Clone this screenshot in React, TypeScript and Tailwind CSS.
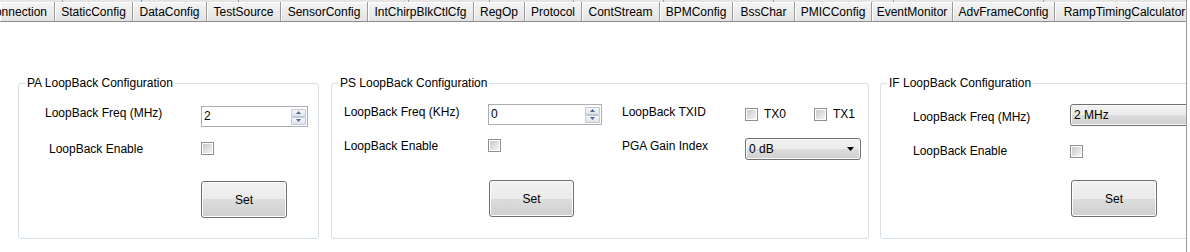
import React from "react";

const tabs = [
  { label: "Connection", w: "w-[54px]", first: true },
  { label: "StaticConfig", w: "w-[78px]" },
  { label: "DataConfig", w: "w-[74px]" },
  { label: "TestSource", w: "w-[74px]" },
  { label: "SensorConfig", w: "w-[87px]" },
  { label: "IntChirpBlkCtlCfg", w: "w-[106px]" },
  { label: "RegOp", w: "w-[51px]" },
  { label: "Protocol", w: "w-[57px]" },
  { label: "ContStream", w: "w-[78px]" },
  { label: "BPMConfig", w: "w-[73px]" },
  { label: "BssChar", w: "w-[62px]" },
  { label: "PMICConfig", w: "w-[77px]" },
  { label: "EventMonitor", w: "w-[81px]" },
  { label: "AdvFrameConfig", w: "w-[102px]" },
  { label: "RampTimingCalculator", w: "w-[140px]", last: true },
];

const upperRow = ["w-[63px]", "w-[79px]", "w-[97px]", "w-[170px]", "w-[81px]", "w-[84px]", "w-[90px]", "w-[110px]", "w-[120px]", "w-[150px]", "w-[160px]"];

function Checkbox() {
  return (
    <div className="w-[13px] h-[13px] shrink-0 border border-[#8e8f8f] bg-white p-[1px]">
      <div className="w-full h-full bg-linear-to-br from-[#c6c9ce] to-[#f5f5f5]" />
    </div>
  );
}

function SpinBox({ value, w }: { value: string; w: string }) {
  return (
    <div className={`${w} h-[21px] shrink-0 border border-[#abadb3] bg-white flex items-center`}>
      <span className="pl-[2px] leading-[19px] text-[12px]">{value}</span>
      <div className="ml-auto mr-[1px] w-[15px] flex flex-col gap-0">
        <div className="h-[8px] border border-[#c2c8d1] rounded-[1px] bg-linear-to-b from-[#f6f7f9] to-[#dfe3ea] flex items-center justify-center">
          <svg width="5" height="3" viewBox="0 0 5 3"><path d="M0 3 L2.5 0 L5 3 Z" fill="#4e6a93" /></svg>
        </div>
        <div className="h-[8px] border border-[#c2c8d1] rounded-[1px] bg-linear-to-b from-[#f6f7f9] to-[#dfe3ea] flex items-center justify-center">
          <svg width="5" height="3" viewBox="0 0 5 3"><path d="M0 0 L5 0 L2.5 3 Z" fill="#4e6a93" /></svg>
        </div>
      </div>
    </div>
  );
}

function Select({ value, w, arrow = true }: { value: string; w: string; arrow?: boolean }) {
  return (
    <div className={`${w} h-[22px] shrink-0 rounded-[3px] border border-[#707070] bg-[linear-gradient(to_bottom,#f2f2f2_0%,#ebebeb_50%,#dddddd_50%,#cfcfcf_100%)] shadow-[inset_0_0_0_1px_#fbfbfb] flex items-center`}>
      <span className="pl-[3px] text-[12px] leading-[14px]">{value}</span>
      {arrow && (
        <svg className="ml-auto mr-[6px]" width="7" height="4" viewBox="0 0 7 4"><path d="M0 0 L7 0 L3.5 4 Z" fill="#000" /></svg>
      )}
    </div>
  );
}

function SetButton({ w }: { w: string }) {
  return (
    <div className={`${w} h-[37px] rounded-[3px] border border-[#707070] bg-[linear-gradient(to_bottom,#f2f2f2_0%,#ebebeb_50%,#dddddd_50%,#cfcfcf_100%)] shadow-[inset_0_0_0_1px_#fcfcfc] flex items-center justify-center text-[12px]`}>
      Set
    </div>
  );
}

function Group({ title, w, children }: { title: string; w: string; children: React.ReactNode }) {
  return (
    <fieldset className={`${w} h-[163px] shrink-0 border border-[#d5dfe5] rounded-[3px]`}>
      <legend className="ml-[6px] px-[2px] text-[12px] leading-[14px]">{title}</legend>
      {children}
    </fieldset>
  );
}

export default function App() {
  return (
    <div className="w-[1190px] h-[252px] bg-white overflow-hidden font-['Liberation_Sans',Arial,sans-serif] text-black text-[12px]">
      <div className="w-[1187px] h-full border-r border-[#9a9a9a] overflow-hidden">
        {/* tab rows */}
        <div className="h-[22px] border-b border-[#8c8c8c] flex flex-col">
          <div className="h-[2px] flex">
            {upperRow.map((w, i) => (
              <div key={i} className={`${w} shrink-0 h-full bg-[#e4e4e4] border-r border-[#a0a0a0]`} />
            ))}
          </div>
          <div className="flex h-[19px]">
            {tabs.map((t) => (
              <div
                key={t.label}
                className={`${t.w} shrink-0 h-full overflow-hidden whitespace-nowrap flex items-center ${t.first ? "justify-end pr-[7px]" : "justify-center border-l border-[#9c9c9c]"} bg-linear-to-b from-[#f5f5f5] to-[#e3e3e3] shadow-[inset_1px_1px_0_#ffffff]`}
              >
                <span className="leading-[14px]">{t.label}</span>
              </div>
            ))}
          </div>
        </div>

        {/* groups */}
        <div className="flex pt-[54px] pl-[18px]">
          <Group title="PA LoopBack Configuration" w="w-[301px]">
            <div className="pl-[26px]">
              <div className="mt-[16px] flex items-start">
                <span className="w-[156px] leading-[14px]">LoopBack Freq (MHz)</span>
                <SpinBox value="2" w="w-[107px]" />
              </div>
              <div className="mt-[15px] flex items-start">
                <span className="ml-[4px] w-[152px] leading-[14px]">LoopBack Enable</span>
                <Checkbox />
              </div>
              <div className="mt-[25px] ml-[156px]">
                <SetButton w="w-[86px]" />
              </div>
            </div>
          </Group>

          <div className="w-[12px] shrink-0" />

          <Group title="PS LoopBack Configuration" w="w-[538px]">
            <div className="pl-[12px]">
              <div className="mt-[14px] flex items-start">
                <span className="mt-[1px] w-[144px] leading-[14px]">LoopBack Freq (KHz)</span>
                <SpinBox value="0" w="w-[114px]" />
                <span className="ml-[20px] mt-[1px] w-[123px] leading-[14px]">LoopBack TXID</span>
                <div className="w-[69px] mt-[3px] flex items-center">
                  <Checkbox />
                  <span className="ml-[6px] leading-[14px]">TX0</span>
                </div>
                <div className="mt-[3px] flex items-center">
                  <Checkbox />
                  <span className="ml-[6px] leading-[14px]">TX1</span>
                </div>
              </div>
              <div className="mt-[13px] flex items-start">
                <span className="mt-[1px] w-[144px] leading-[14px]">LoopBack Enable</span>
                <div className="mt-[1px] w-[134px]">
                  <Checkbox />
                </div>
                <span className="mt-[1px] w-[123px] leading-[14px]">PGA Gain Index</span>
                <Select value="0 dB" w="w-[116px]" />
              </div>
              <div className="mt-[20px] ml-[145px]">
                <SetButton w="w-[85px]" />
              </div>
            </div>
          </Group>

          <div className="w-[11px] shrink-0" />

          <Group title="IF LoopBack Configuration" w="w-[330px]">
            <div className="pl-[32px]">
              <div className="mt-[14px] flex items-start">
                <span className="mt-[6px] w-[157px] leading-[14px]">LoopBack Freq (MHz)</span>
                <Select value="2 MHz" w="w-[200px]" />
              </div>
              <div className="mt-[19px] flex items-start">
                <span className="-mt-[1px] w-[157px] leading-[14px]">LoopBack Enable</span>
                <Checkbox />
              </div>
              <div className="mt-[22px] ml-[158px]">
                <SetButton w="w-[86px]" />
              </div>
            </div>
          </Group>
        </div>
      </div>
    </div>
  );
}
